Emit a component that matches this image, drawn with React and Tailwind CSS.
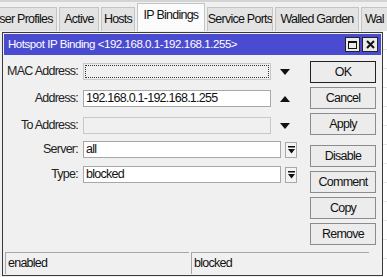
import { useState } from 'react'

// ─── Small pieces ────────────────────────────────────────────────────────────

const tabs = [
  { label: 'ser Profiles', w: 'w-[62px] justify-center' },
  { label: 'Active', w: 'w-[40px] justify-center' },
  { label: 'Hosts', w: 'w-[34px] justify-center' },
  { label: 'IP Bindings', w: 'w-[68px] justify-center' },
  { label: 'Service Ports', w: 'w-[66px] justify-center' },
  { label: 'Walled Garden', w: 'w-[84px] justify-center' },
  { label: 'Wal', w: 'w-[40px] justify-start pl-[3px]' },
]

function Arrow({ up }) {
  return (
    <svg width="10" height="6" viewBox="0 0 10 6" className="shrink-0">
      {up ? <polygon points="0,6 10,6 5,0" fill="#111" /> : <polygon points="0,0 10,0 5,6" fill="#111" />}
    </svg>
  )
}

function DropBtn() {
  return (
    <div className="w-[12px] h-[16px] ml-[4px] border border-[#a8a8a8] bg-[#f4f4f4] flex items-center justify-center">
      <svg width="7" height="8" viewBox="0 0 7 8">
        <rect x="0" y="0" width="7" height="1.5" fill="#111" />
        <polygon points="0,3 7,3 3.5,7.5" fill="#111" />
      </svg>
    </div>
  )
}

function Row({ label, value, disabled, focus, arrow, drop }) {
  return (
    <div className="flex items-center h-[17px]">
      <div className="w-[80px] text-right pr-[5px] text-[#222] whitespace-nowrap">{label}</div>
      <div
        className={
          'h-[17px] flex items-center px-[2px] ' +
          (drop ? 'w-[198px] ' : 'w-[188px] ') +
          (disabled ? 'bg-[#f0f0f0] border border-[#c8c8c8] ' : 'bg-white border border-[#a8a8a8] ') +
          (focus ? 'outline outline-1 outline-dotted outline-[#333] outline-offset-[-3px]' : '')
        }
      >
        {value}
      </div>
      {arrow && <div className="w-[26px] flex justify-center ml-[1px]"><Arrow up={arrow === 'up'} /></div>}
      {drop && <DropBtn />}
    </div>
  )
}

function Btn({ children, def }) {
  return (
    <div className={'h-[22px] flex items-center justify-center bg-[#ececec] ' + (def ? 'border border-[#222]' : 'border border-[#8c8c8c]')}>
      {children}
    </div>
  )
}

// ─── App ─────────────────────────────────────────────────────────────────────

export default function App() {
  const [tab] = useState('IP Bindings')
  return (
    <div className="w-[387px] h-[277px] bg-[#f0f0f0] overflow-hidden text-[12.5px] tracking-[-0.75px] text-[#111]" style={{ fontFamily: '"Liberation Sans", Arial, sans-serif' }}>

      {/* Tabs */}
      <div className="h-[31px] border-t-[2px] border-[#d4d4d4] flex items-end ml-[-5px] bg-[#f0f0f0]">
        {tabs.map(t => (
          <div
            key={t.label}
            className={
              t.w + ' shrink-0 flex items-center border border-b-0 border-[#c4c4c4] mr-[2px] whitespace-nowrap overflow-hidden ' +
              (t.label === tab ? 'h-[28px] bg-[#fbfbfb] pb-[4px]' : 'h-[24px] bg-[#e3e3e3]')
            }
          >
            {t.label}
          </div>
        ))}
      </div>

      {/* Window over list */}
      <div className="flex h-[246px]">
        <div className="w-[2px] shrink-0" />
        <div className="w-[381px] shrink-0 h-[244px] mt-[1px] border border-[#3a3a3a] bg-[#f0f0f0] flex flex-col">

          {/* Title bar */}
          <div className="mx-[1px] mt-[1px] h-[21px] bg-[#4b4bd2] flex items-center pl-[4px] pr-[3px]">
            <span className="text-white flex-1 text-[11.5px] tracking-[-0.45px]">Hotspot IP Binding &lt;192.168.0.1-192.168.1.255&gt;</span>
            <div className="w-[15px] h-[15px] bg-[#eaeaea] border border-[#222] flex items-center justify-center mr-[2px]">
              <div className="w-[9px] h-[8px] border border-[#111] border-t-2" />
            </div>
            <div className="w-[16px] h-[15px] bg-[#eaeaea] border border-[#222] flex items-center justify-center">
              <svg width="9" height="9" viewBox="0 0 9 9">
                <path d="M1 1 L8 8 M8 1 L1 8" stroke="#111" strokeWidth="2" />
              </svg>
            </div>
          </div>

          {/* Body */}
          <div className="flex flex-1 pt-[6px]">
            <div className="w-[303px] flex flex-col pt-[2px]">
              <div className="flex flex-col gap-[10px]">
                <Row label="MAC Address:" value="" disabled focus arrow="down" />
                <Row label="Address:" value="192.168.0.1-192.168.1.255" arrow="up" />
                <Row label="To Address:" value="" disabled arrow="down" />
              </div>
              <div className="flex flex-col gap-[8px] mt-[7px]">
                <Row label="Server:" value="all" drop />
                <Row label="Type:" value="blocked" drop />
              </div>
            </div>
            <div className="w-[66px] ml-[4px] flex flex-col">
              <div className="flex flex-col gap-[4px]">
                <Btn def>OK</Btn>
                <Btn>Cancel</Btn>
                <Btn>Apply</Btn>
              </div>
              <div className="flex flex-col gap-[4px] mt-[10px]">
                <Btn>Disable</Btn>
                <Btn>Comment</Btn>
                <Btn>Copy</Btn>
                <Btn>Remove</Btn>
              </div>
            </div>
          </div>

          {/* Status bar */}
          <div className="h-[22px] flex mx-[2px] mb-[1px] gap-[2px]">
            <div className="w-[184px] border-t border-l border-[#a8a8a8] flex items-center pl-[2px]">enabled</div>
            <div className="w-[178px] border-t border-l border-[#a8a8a8] flex items-center pl-[2px]">blocked</div>
          </div>
        </div>

        {/* List behind */}
        <div className="flex-1 bg-white flex flex-col">
          {Array.from({ length: 12 }).map((_, i) => (
            <div key={i} className="h-[19px] border-b border-[#e4e4e4]" />
          ))}
        </div>
      </div>
    </div>
  )
}
